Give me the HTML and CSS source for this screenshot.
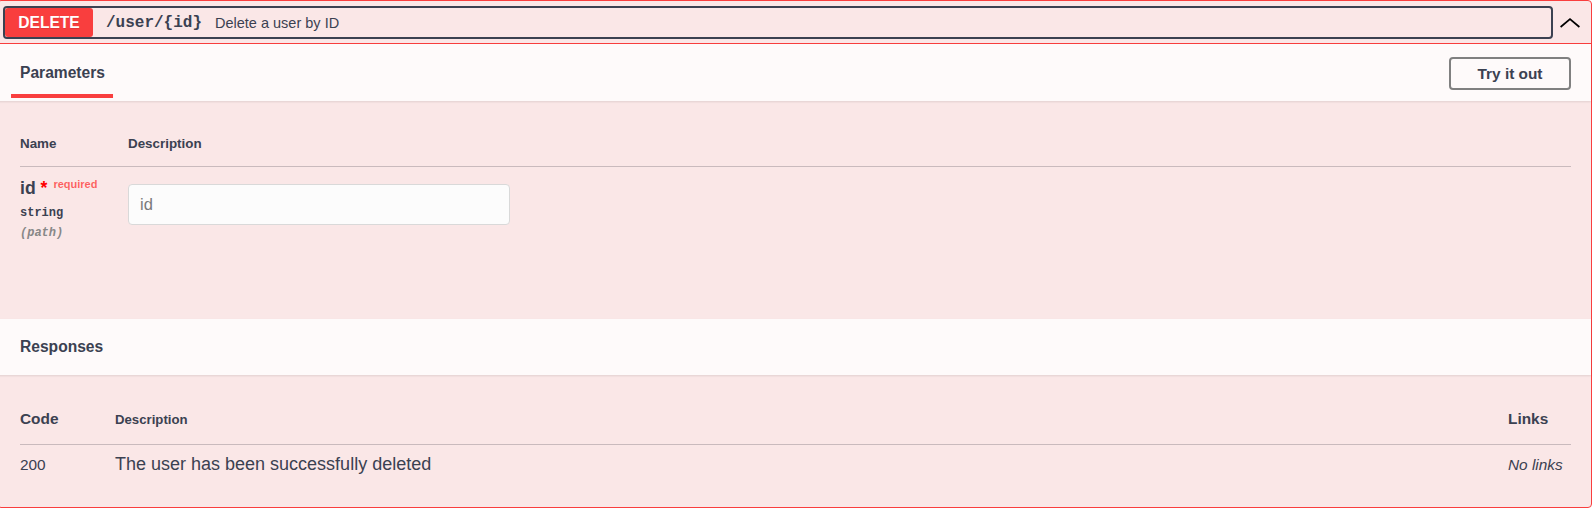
FILE: index.html
```html
<!DOCTYPE html>
<html>
<head>
<meta charset="utf-8">
<title>DELETE /user/{id}</title>
<link rel="stylesheet" href="styles.css">
</head>
<body>
<div class="opblock">
  <div class="summary">
    <button class="summary-control">
      <span class="method">DELETE</span>
      <span class="path">/user/{id}</span>
      <span class="summary-desc">Delete a user by ID</span>
    </button>
    <svg class="arrow" width="20" height="20" viewBox="0 0 20 20"><path d="M0.6 14 L10 6 L19.4 14"/></svg>
  </div>

  <div class="section-header">
    <h4 class="tab"><span class="tab-label">Parameters</span></h4>
    <button class="try-out">Try it out</button>
  </div>

  <div class="params-body">
    <div class="params-head">
      <div class="col-name">Name</div>
      <div class="col-desc">Description</div>
    </div>
    <div class="param-row">
      <div class="col-name">
        <div class="param-name">id<span class="star">&nbsp;*</span><span class="req">required</span></div>
        <div class="param-type">string</div>
        <div class="param-in">(path)</div>
      </div>
      <div class="col-desc">
        <input class="param-input" type="text" placeholder="id">
      </div>
    </div>
  </div>

  <div class="section-header resp-header">
    <h4 class="resp-title">Responses</h4>
  </div>

  <div class="resp-body">
    <div class="resp-head">
      <div class="col-code">Code</div>
      <div class="col-rdesc">Description</div>
      <div class="col-links">Links</div>
    </div>
    <div class="resp-row">
      <div class="col-code code-val">200</div>
      <div class="col-rdesc rdesc-val">The user has been successfully deleted</div>
      <div class="col-links links-val">No links</div>
    </div>
  </div>
</div>
</body>
</html>
```

FILE: styles.css
```css
* { box-sizing: border-box; }
html, body { margin: 0; padding: 0; background: #fff; }
body {
  font-family: "Liberation Sans", Arial, sans-serif;
  color: #3b4151;
  overflow: hidden;
}

.opblock {
  margin: 0 3px 0 -3px;
  height: 508px;
  border: 1px solid #f93e3e;
  border-radius: 4px;
  background: #fae7e7;
}

/* summary bar */
.summary {
  display: flex;
  align-items: center;
  height: 43px;
  padding: 5px 11px 4px 5px;
  border-bottom: 1px solid #f93e3e;
}
.summary-control {
  flex: 1;
  display: flex;
  align-items: center;
  height: 33px;
  padding: 0;
  border: 2px solid #3b4151;
  border-radius: 4px;
  background: transparent;
  color: #3b4151;
  font-family: inherit;
  text-align: left;
  cursor: pointer;
}
.method {
  flex: none;
  display: flex;
  align-items: center;
  justify-content: center;
  width: 88px;
  height: 29px;
  border-radius: 3px;
  background: #f93e3e;
  color: #fff;
  font-size: 15.6px;
  font-weight: 700;
  text-shadow: 0 1px 0 rgba(0,0,0,.1);
}
.path {
  padding: 0 13px 0 13px;
  font-family: "Liberation Mono", "DejaVu Sans Mono", monospace;
  font-size: 16px;
  font-weight: 700;
  color: #3b4151;
}
.summary-desc {
  font-size: 14.5px;
  color: #3b4151;
}
.arrow {
  flex: none;
  margin-left: 7px;
}
.arrow path {
  fill: none;
  stroke: #000;
  stroke-width: 1.7;
}

/* section headers */
.section-header {
  position: relative;
  z-index: 1;
  display: flex;
  align-items: center;
  justify-content: space-between;
  height: 57px;
  padding: 0 20px 0 22px;
  background: rgba(255,255,255,.8);
  box-shadow: 0 1px 2px rgba(0,0,0,.1);
}
.resp-header { height: 56px; }
.tab, .resp-title {
  margin: 0;
  font-size: 15.6px;
  font-weight: 700;
  line-height: 18px;
}
.tab-label { position: relative; }
.tab-label::after {
  content: "";
  position: absolute;
  left: 50%;
  bottom: -17px;
  width: 120%;
  height: 4px;
  transform: translateX(-50%);
  background: #f93e3e;
}
.try-out {
  width: 122px;
  height: 33px;
  margin-top: 2px;
  padding: 0;
  border: 2px solid #808080;
  border-radius: 4px;
  background: transparent;
  color: #3b4151;
  font-family: inherit;
  font-size: 15.4px;
  font-weight: 700;
  cursor: pointer;
}

/* parameters */
.params-body {
  height: 218px;
  padding: 35px 20px 0 22px;
}
.params-head {
  display: flex;
  padding-bottom: 14px;
  border-bottom: 1px solid #c9babd;
  font-size: 13.4px;
  font-weight: 700;
  line-height: 16px;
}
.col-name { flex: none; width: 108px; }
.col-desc { flex: 1; }
.param-row { display: flex; }
.param-row .col-name { padding-top: 11px; }
.param-row .col-desc { padding-top: 17px; }
.param-name {
  font-size: 17.6px;
  font-weight: 700;
  line-height: 20px;
  white-space: nowrap;
}
.star { color: red; }
.req {
  padding-left: 6px;
  font-size: 11px;
  line-height: 11px;
  vertical-align: 6px;
  color: rgba(255,0,0,.6);
}
.param-type, .param-in {
  font-family: "Liberation Mono", "DejaVu Sans Mono", monospace;
  font-size: 12px;
  font-weight: 700;
  line-height: 16px;
}
.param-type { margin-top: 7px; }
.param-in {
  margin-top: 4px;
  font-style: italic;
  color: #888;
}
.param-input {
  display: block;
  width: 382px;
  height: 41px;
  margin: 0;
  padding: 0 11px;
  border: 1px solid #d9d9d9;
  border-radius: 4px;
  background: #fcfcfc;
  font-family: "Liberation Sans", Arial, sans-serif;
  font-size: 16.5px;
  color: #3b4151;
  outline: none;
}
.param-input::placeholder { color: #7a7a7a; }

/* responses */
.resp-body { padding: 35px 20px 0 22px; }
.resp-head {
  display: flex;
  align-items: baseline;
  padding-bottom: 15px;
  border-bottom: 1px solid #c9babd;
  font-weight: 700;
  line-height: 18px;
}
.col-code { flex: none; width: 95px; font-size: 15.4px; }
.col-rdesc { flex: 1; font-size: 13.2px; }
.col-links { flex: none; width: 63px; font-size: 15.4px; }
.resp-row {
  display: flex;
  align-items: baseline;
  padding-top: 9px;
  line-height: 18px;
}
.rdesc-val { font-size: 18px; line-height: 20px; }
.links-val { font-style: italic; }
```
